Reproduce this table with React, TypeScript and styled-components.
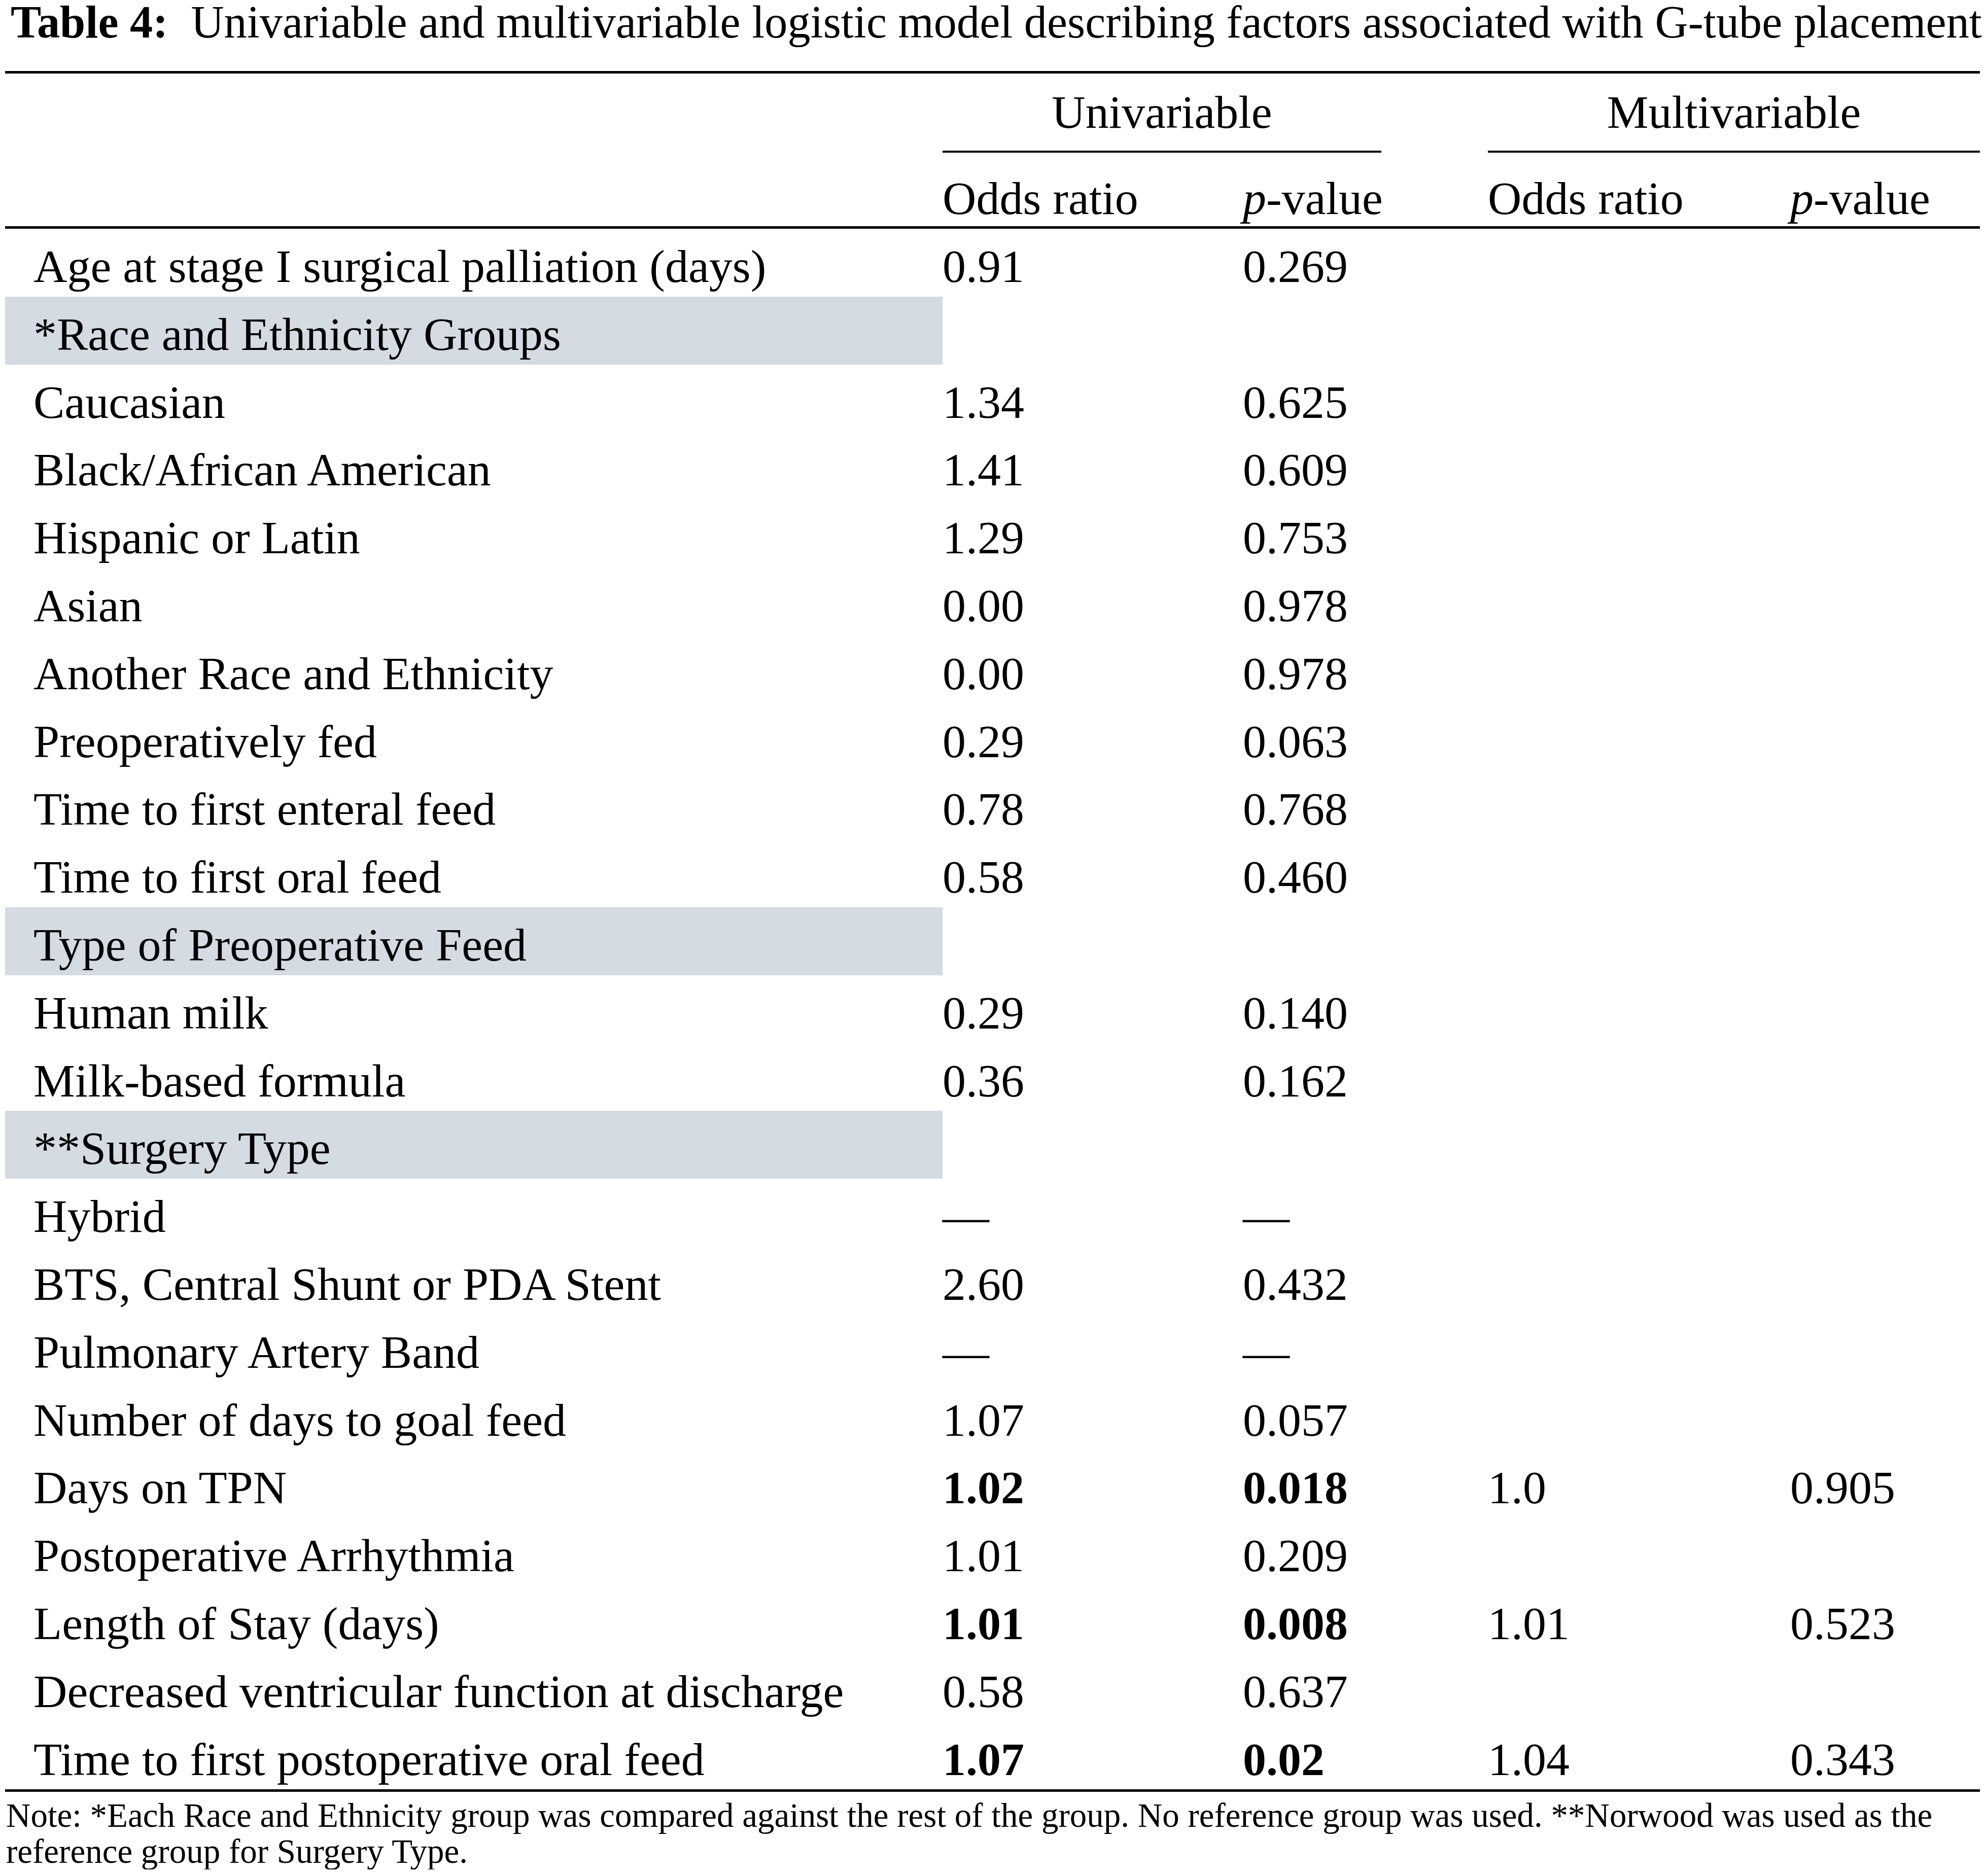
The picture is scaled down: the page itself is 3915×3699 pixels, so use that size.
import React from "react";
import styled, { createGlobalStyle } from "styled-components";

const GlobalStyle = createGlobalStyle`
  html, body {
    margin: 0;
    padding: 0;
    background: #ffffff;
  }
  body {
    font-family: "Liberation Serif", "Times New Roman", serif;
    color: #000000;
  }
`;

const Page = styled.div`
  width: 3915px;
  box-sizing: border-box;
  padding: 0 12px 0 10px;
  font-family: "Liberation Serif", "Times New Roman", serif;
  color: #000;
`;

const Caption = styled.div`
  font-size: 90.3px;
  line-height: 88px;
  white-space: nowrap;
  padding-left: 11px;
  margin-bottom: 52px;
`;

const CaptionLabel = styled.span`
  font-weight: bold;
`;

const Table = styled.div`
  border-top: 5px solid #000;
  border-bottom: 5px solid #000;
  font-size: 92px;
`;

const COLS = "1848px 592px 273px 210px 596px 374px";

const SpannerRow = styled.div`
  display: grid;
  grid-template-columns: ${COLS};
  height: 152px;
`;

const Spanner = styled.div<{ $start: number }>`
  grid-column: ${(p) => p.$start} / span 2;
  text-align: center;
  padding-top: 4px;
  line-height: 144px;
  height: 148px;
  border-bottom: 4px solid #000;
`;

const SubHeadRow = styled.div`
  display: grid;
  grid-template-columns: ${COLS};
  border-bottom: 5px solid #000;
  height: 149px;
`;

const HeadCell = styled.div<{ $col: number }>`
  grid-column: ${(p) => p.$col};
  padding-top: 39px;
  line-height: 110px;
  white-space: nowrap;
`;

const Italic = styled.i`
  font-style: italic;
`;

const Row = styled.div`
  display: grid;
  grid-template-columns: ${COLS};
  height: 133.8px;
`;

const LabelCell = styled.div<{ $group?: boolean }>`
  grid-column: 1;
  padding-top: 16px;
  padding-left: 56px;
  line-height: 117.8px;
  white-space: nowrap;
  background: ${(p) => (p.$group ? "#d4dbe2" : "transparent")};
`;

const ValueCell = styled.div<{ $col: number; $bold?: boolean }>`
  grid-column: ${(p) => p.$col};
  padding-top: 16px;
  line-height: 117.8px;
  white-space: nowrap;
  font-weight: ${(p) => (p.$bold ? "bold" : "normal")};
`;

const Note = styled.div`
  font-size: 67px;
  line-height: 71px;
  margin-top: 11px;
  padding-left: 2px;
  white-space: nowrap;
`;

type DataRow = {
  label: string;
  group?: boolean;
  or?: string;
  p?: string;
  mor?: string;
  mp?: string;
  bold?: boolean;
};

const rows: DataRow[] = [
  { label: "Age at stage I surgical palliation (days)", or: "0.91", p: "0.269" },
  { label: "*Race and Ethnicity Groups", group: true },
  { label: "Caucasian", or: "1.34", p: "0.625" },
  { label: "Black/African American", or: "1.41", p: "0.609" },
  { label: "Hispanic or Latin", or: "1.29", p: "0.753" },
  { label: "Asian", or: "0.00", p: "0.978" },
  { label: "Another Race and Ethnicity", or: "0.00", p: "0.978" },
  { label: "Preoperatively fed", or: "0.29", p: "0.063" },
  { label: "Time to first enteral feed", or: "0.78", p: "0.768" },
  { label: "Time to first oral feed", or: "0.58", p: "0.460" },
  { label: "Type of Preoperative Feed", group: true },
  { label: "Human milk", or: "0.29", p: "0.140" },
  { label: "Milk-based formula", or: "0.36", p: "0.162" },
  { label: "**Surgery Type", group: true },
  { label: "Hybrid", or: "\u2014", p: "\u2014" },
  { label: "BTS, Central Shunt or PDA Stent", or: "2.60", p: "0.432" },
  { label: "Pulmonary Artery Band", or: "\u2014", p: "\u2014" },
  { label: "Number of days to goal feed", or: "1.07", p: "0.057" },
  { label: "Days on TPN", or: "1.02", p: "0.018", mor: "1.0", mp: "0.905", bold: true },
  { label: "Postoperative Arrhythmia", or: "1.01", p: "0.209" },
  { label: "Length of Stay (days)", or: "1.01", p: "0.008", mor: "1.01", mp: "0.523", bold: true },
  { label: "Decreased ventricular function at discharge", or: "0.58", p: "0.637" },
  { label: "Time to first postoperative oral feed", or: "1.07", p: "0.02", mor: "1.04", mp: "0.343", bold: true },
];

export default function App() {
  return (
    <>
      <GlobalStyle />
      <Page>
        <Caption>
          <CaptionLabel>Table 4:</CaptionLabel>
          {"\u00a0 Univariable and multivariable logistic model describing factors associated with G-tube placement"}
        </Caption>
        <Table>
          <SpannerRow>
            <Spanner $start={2}>Univariable</Spanner>
            <Spanner $start={5}>Multivariable</Spanner>
          </SpannerRow>
          <SubHeadRow>
            <HeadCell $col={2}>Odds ratio</HeadCell>
            <HeadCell $col={3}>
              <Italic>p</Italic>-value
            </HeadCell>
            <HeadCell $col={5}>Odds ratio</HeadCell>
            <HeadCell $col={6}>
              <Italic>p</Italic>-value
            </HeadCell>
          </SubHeadRow>
          {rows.map((r, i) => (
            <Row key={i}>
              <LabelCell $group={r.group}>{r.label}</LabelCell>
              {r.or && (
                <ValueCell $col={2} $bold={r.bold}>
                  {r.or}
                </ValueCell>
              )}
              {r.p && (
                <ValueCell $col={3} $bold={r.bold}>
                  {r.p}
                </ValueCell>
              )}
              {r.mor && <ValueCell $col={5}>{r.mor}</ValueCell>}
              {r.mp && <ValueCell $col={6}>{r.mp}</ValueCell>}
            </Row>
          ))}
        </Table>
        <Note>
          Note: *Each Race and Ethnicity group was compared against the rest of the group. No reference group was used. **Norwood was used as the
          <br />
          reference group for Surgery Type.
        </Note>
      </Page>
    </>
  );
}
